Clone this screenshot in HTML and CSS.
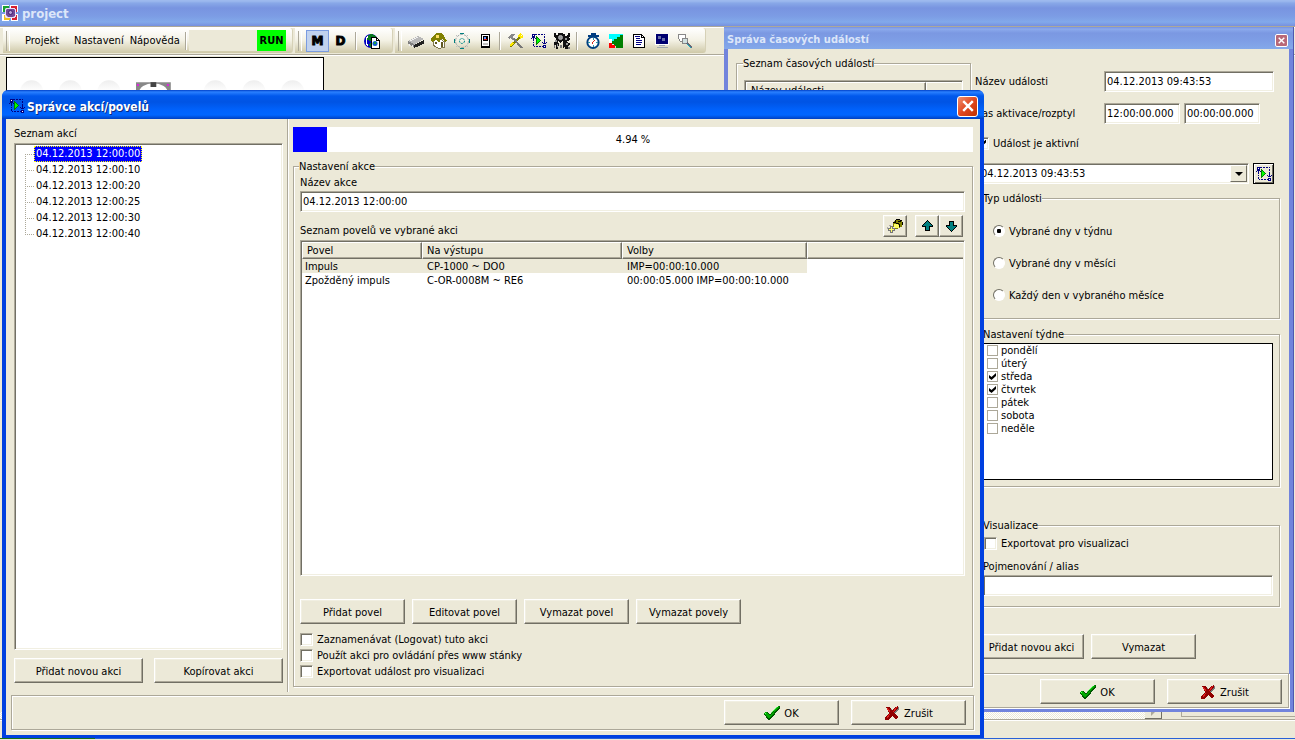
FILE: index.html
```html
<!DOCTYPE html>
<html lang="cs">
<head>
<meta charset="utf-8">
<title>project</title>
<link rel="stylesheet" href="styles.css">
</head>
<body>
<svg class="defs" aria-hidden="true">
  <symbol id="action" viewBox="0 0 16 16">
    <path fill="none" stroke="#000080" d="M4 1.5h2M7 1.5h2M10 1.5h2M13 1.5h1M13.5 3v2M13.5 6v5M2.5 4v4M2.5 9v1M2.5 11v2M3 13.5h1M5 13.5h2M8 13.5h2M11 13.5h1M0 5.5h1M1 4.5h3M4 5.5h1M11 9.5h1M12 10.5h3M15 9.5h1"/>
    <path fill="#fff" stroke="#000080" d="M1.5 1.5h2v2h-2zM12.5 12.5h2v2h-2z"/>
    <path fill="#008000" d="M5 3h1v1h1v1h1v1h1v1h1v1h-1v1H8v1H7v1H6v1H5z"/>
    <path fill="#0f0" d="M6 5h1v1h1v1h1v1H8v1H7v1H6z"/>
  </symbol>
  <symbol id="check" viewBox="0 0 16 16">
    <path fill="#005800" d="M0 9l3-2 3 3 8-9h2v2L6 15H4z"/><path fill="#0a0" d="M0 8l2-1 4 4 8-10h1v1L6 13H4z"/><path stroke="#6f6" d="M1 8l1 0M7 8l6-6" fill="none"/>
  </symbol>
  <symbol id="cross" viewBox="0 0 16 16">
    <path fill="#777" d="M3 3h4l2 3 3-4h3v2l-4 4 3 4-2 3-4-4-3 4H2v-2l4-5z"/><path fill="#900000" d="M2 2h4l2 4 3-4 3-1v2l-4 5 4 4-2 3-4-4-3 4H1v-2l4-5z"/><path fill="none" stroke="#e02020" d="M3 3l3 4M13 2l-4 5M3 13l3-4"/>
  </symbol>
</svg>

<main class="desktop">
  <header class="app-title">
    <svg class="app-logo" viewBox="0 0 16 16"><path fill="#fff" d="M0 0h7v7H0zM8 0h8v7H8zM0 9h7v7H0zM9 9h7v7H9z"/><path fill="#18a030" d="M1 1h6v6H1z"/><path fill="#d82030" d="M9 1h6v6H9zM10 10h5v5h-5z"/><path fill="#f0c020" d="M2 10h6v5H2z"/><path fill="#e8e0f4" d="M4 3h9v1h1v8h-1v1H4l-1-1V4z"/><path fill="#704898" d="M5 4h7l1 1v6l-2 1H6l-2-2V5z"/><circle cx="8.500" cy="7.500" r="2" fill="#b8a0d8" stroke="#402070"/></svg>
    <h1>project</h1>
  </header>

  <nav class="toolbar">
    <div class="band band-menu">
      <button class="menu">Projekt</button><button class="menu">Nastavení</button><button class="menu">Nápověda</button>
      <i class="sep"></i>
      <div class="run-box"><b>RUN</b></div>
    </div>
    <div class="band band-mode">
      <button class="tool letter on">M</button><button class="tool letter">D</button><i class="sep"></i>
      <button class="tool" aria-label="Web"><svg viewBox="0 0 16 16"><circle cx="7" cy="8" r="7" fill="#0000c0"/><path fill="#087820" d="M4 2l4-1 4 2v3L8 6 6 9 4 7l-2 1 1-4zM6 10l3 1-1 4-3-2z"/><path fill="none" stroke="#fff" d="M4 3L2 6v4l2 3"/><path fill="#fff" stroke="#000" d="M7.500 4.500h5l3 3v8h-8z"/><path fill="none" stroke="#000" d="M12.500 4.500v3h3"/><circle cx="11" cy="10.500" r="2.500" fill="#1060d0"/><path fill="#20a040" d="M10 9h2v2h-2z"/></svg></button>
    </div>
    <div class="band band-tools">
      <button class="tool" aria-label="Modul"><svg viewBox="0 0 16 16"><path fill="#b8b8b8" d="M0 8l10-5 6 3-10 6z"/><path fill="#808080" d="M0 8l6 3v3L0 11z"/><path fill="#202020" d="M6 12l10-5v3l-1 2-1-1-1 2-1-1-1 2-1-1-1 2-1-1-2 1z"/><path stroke="#f0f0f0" fill="none" d="M2 8l8-4M1 11v2M4 12v2"/></svg></button>
      <button class="tool" aria-label="Dům"><svg viewBox="0 0 16 16"><path fill="#fff" stroke="#807850" d="M2.500 7.500L8 5l5.500 4v5L8 15.500l-5.500-3z"/><path fill="#808000" d="M0 6l4-5 2-1h5l5 8-2 1-3-4-3 5-3-3-4 2z"/><path fill="#ffe060" d="M5 2h3v3H5z"/><path fill="#605820" d="M10 9h2v5h-2zM4 9h2v2H4z"/></svg></button>
      <button class="tool" aria-label="Nastavení"><svg viewBox="0 0 16 16" fill="none"><circle cx="8" cy="8" r="6.500" stroke="#9aa8a8" stroke-dasharray="3 1"/><path stroke="#008080" d="M6 .5h4M6 15.500h4M.5 6v4M15.500 6v4"/><path stroke="#c0c0c0" d="M2 2l2 2M12 12l2 2M2 14l2-2M12 4l2-2"/><circle cx="8" cy="8" r="2.500" stroke="#008888" stroke-dasharray="2 1"/></svg></button>
      <button class="tool" aria-label="Zařízení"><svg viewBox="0 0 16 16"><path fill="#fff" stroke="#000" d="M4.500 1.500h8v12h-8z"/><path fill="#000" d="M6 3h5v5H6zM4 14h9v1H4z"/><path fill="#6090ff" d="M7 4h2v2H7z"/><path fill="#e01010" d="M7 6h3v1H7z"/><path fill="#c0c0c0" d="M6 10h5v2H6z"/></svg></button>
      <i class="sep"></i>
      <button class="tool" aria-label="Nástroje"><svg viewBox="0 0 16 16"><path fill="none" stroke="#808000" stroke-width="2" d="M2 14L12 4"/><path fill="none" stroke="#ffe800" stroke-width="2" d="M10 4l3-3M12 5l3-2M2 13l3-3"/><path fill="none" stroke="#777" stroke-width="2" d="M5 5l9 10"/><path fill="#888" d="M0 4l3-3h5L5 3l1 3-2 1-1-2-2 1z"/></svg></button>
      <button class="tool" aria-label="Akce"><svg><use href="#action"/></svg></button>
      <button class="tool" aria-label="Stroje"><svg viewBox="0 0 16 16"><path fill="#111" d="M0 0h2v2h2V0h5v1h2v2l3-1V0h2v3l-2 2h2v2l-3 1 1 2h2v2l-2 1v3h-3v-2l-2 1V9L8 8l-1 2-3-2 1 3-1 5H2v-4H0V9l2-1V5L0 4z"/><path fill="#999" d="M5 3h3v3H5zM1 7h2v2H1zM11 5h2v2h-2zM12 10h2v2h-2zM3 11h1v3H3z"/><circle cx="6.500" cy="4.500" r="2" fill="none" stroke="#bbb"/><path fill="#777" d="M0 12h1v3H0zM6 12h2v3H6zM14 14h2v2h-2z"/></svg></button>
      <i class="sep"></i>
      <button class="tool" aria-label="Časovač"><svg viewBox="0 0 16 17"><path fill="#003c80" d="M6 0h5v2h3v2h-3v2H6V4H3V2h3z"/><circle cx="8" cy="10" r="6" fill="#fff" stroke="#004080" stroke-width="2"/><path stroke="#2090a0" d="M8 5v2M8 13v2M3 10h2M11 10h2"/><path stroke="#d02010" d="M8 10l3-3M7.500 10v2"/></svg></button>
      <button class="tool" aria-label="Graf"><svg viewBox="0 0 16 16"><path fill="#0ff" d="M1 1h14v7H1z"/><path fill="#008000" d="M15 1v14H8v-2H6v-2H4V8h2V6h3V4h3V2h3z"/><path fill="red" d="M1 10h3v2h3v3H1z"/><path fill="#fff" d="M1 6h3v4H1z"/></svg></button>
      <button class="tool" aria-label="Dokument"><svg viewBox="0 0 16 16"><path fill="#fff" stroke="#000" d="M2.500 1.500h8l3 3v10h-11z"/><path fill="none" stroke="#000" d="M10.500 1.500v3h3M4 14.500h10"/><path stroke="#000080" d="M4 3.500h5M5 5.500h4M5 7.500h6M5 9.500h6M5 11.500h5"/></svg></button>
      <button class="tool" aria-label="Monitor"><svg viewBox="0 0 16 16"><path fill="#fff" d="M1 1h14v11H1z"/><path fill="#000070" d="M2 1h12v10H2z"/><path fill="#6870a8" d="M4 3h3v3H4zM8 5h3v3H8z"/><path fill="#a0a8b0" d="M5 12h6v1H5zM3 14h11v1H3z"/></svg></button>
      <button class="tool" aria-label="Hledat"><svg viewBox="0 0 16 16"><path fill="#fff" stroke="#888" d="M1.500 1.500h7v7h-5l-2-3z"/><path fill="#d0e0e0" stroke="#888" d="M5.500 5.500h5v5h-5z"/><path stroke="#667" stroke-width="2" d="M10 10l5 5"/><path stroke="#10b0c0" d="M10 11l4 4"/></svg></button>
    </div>
  </nav>

  <div class="canvas">
    <svg class="plan" viewBox="0 0 316 60" aria-hidden="true">
      <defs><linearGradient id="ball" x2="0" y2="1"><stop stop-color="#eee"/><stop offset=".4" stop-color="#fcfcfc"/><stop offset="1" stop-color="#e2e2e2"/></linearGradient></defs>
      <g fill="url(#ball)"><circle cx="20" cy="35" r="12"/><circle cx="60" cy="35" r="12"/><circle cx="100" cy="35" r="12"/><circle cx="210" cy="35" r="12"/><circle cx="250" cy="35" r="12"/><circle cx="290" cy="35" r="12"/></g>
      <path fill="#888" d="M128 25h36v30h-36z"/><ellipse cx="146" cy="36" rx="15" ry="10" fill="#fff"/><path fill="#444" d="M143 25h6v5h-6z"/><path fill="#e020e0" d="M129 27h2v2h-2zM160 27h2v2h-2z"/>
    </svg>
  </div>

  <footer class="status"><div class="scroll-row"><span class="track"></span><span class="arrow"></span><span class="pane"></span></div></footer>

  <section class="window events" aria-label="Správa časových událostí">
    <header class="titlebar"><h2>Správa časových událostí</h2><button class="close" aria-label="Zavřít"><svg viewBox="0 0 10 10"><path d="M1 1l8 8M9 1L1 9"/></svg></button></header>
    <div class="events-body">
      <fieldset class="group events-list"><legend>Seznam časových událostí</legend>
        <div class="sunken grid"><table><colgroup><col class="c-event"><col></colgroup><thead><tr><th>Název události</th><th></th></tr></thead></table></div>
      </fieldset>
      <form class="events-form">
        <div class="row"><label for="ev-name">Název události</label><input class="sunken ev-name" id="ev-name" value="04.12.2013 09:43:53"></div>
        <div class="row"><label for="ev-time">Čas aktivace/rozptyl</label><span class="times"><input class="sunken" id="ev-time" value="12:00:00.000"><input class="sunken" aria-label="Rozptyl" value="00:00:00.000"></span></div>
        <label class="tick active-row"><input type="checkbox" checked>Událost je aktivní</label>
        <div class="combo-row">
          <div class="combo sunken"><select aria-label="Akce"><option>04.12.2013 09:43:53</option></select><span class="drop" aria-hidden="true"></span></div>
          <button type="button" class="open-actions" aria-label="Správce akcí"><svg><use href="#action"/></svg></button>
        </div>
        <fieldset class="group type"><legend>Typ události</legend>
          <label class="radio"><input type="radio" name="type" checked>Vybrané dny v týdnu</label>
          <label class="radio"><input type="radio" name="type">Vybrané dny v měsíci</label>
          <label class="radio"><input type="radio" name="type">Každý den v vybraného měsíce</label>
        </fieldset>
        <fieldset class="group week"><legend>Nastavení týdne</legend>
          <div class="days">
            <label><input type="checkbox">pondělí</label>
            <label><input type="checkbox">úterý</label>
            <label><input type="checkbox" checked>středa</label>
            <label><input type="checkbox" checked>čtvrtek</label>
            <label><input type="checkbox">pátek</label>
            <label><input type="checkbox">sobota</label>
            <label><input type="checkbox">neděle</label>
          </div>
        </fieldset>
        <fieldset class="group visual"><legend>Visualizace</legend>
          <label class="tick"><input type="checkbox">Exportovat pro visualizaci</label>
          <label class="alias" for="alias">Pojmenování / alias</label>
          <input class="sunken" id="alias">
        </fieldset>
        <div class="event-buttons"><button type="button" class="btn">Přidat novou akci</button><button type="button" class="btn">Vymazat</button></div>
      </form>
    </div>
    <footer class="actions"><button class="btn big"><svg><use href="#check"/></svg>OK</button><button class="btn big"><svg><use href="#cross"/></svg>Zrušit</button></footer>
  </section>

  <section class="window manager" aria-label="Správce akcí/povelů">
    <header class="titlebar"><svg class="title-icon"><use href="#action"/></svg><h2>Správce akcí/povelů</h2><button class="close" aria-label="Zavřít"><svg viewBox="0 0 10 10"><path d="M1 1l8 8M9 1L1 9"/></svg></button></header>
    <div class="manager-body">
      <div class="left">
        <h3>Seznam akcí</h3>
        <ul class="sunken tree">
          <li><span class="selected">04.12.2013 12:00:00</span></li>
          <li><span>04.12.2013 12:00:10</span></li>
          <li><span>04.12.2013 12:00:20</span></li>
          <li><span>04.12.2013 12:00:25</span></li>
          <li><span>04.12.2013 12:00:30</span></li>
          <li><span>04.12.2013 12:00:40</span></li>
        </ul>
        <div class="left-buttons"><button class="btn">Přidat novou akci</button><button class="btn">Kopírovat akci</button></div>
      </div>
      <div class="right">
        <div class="progress" role="progressbar" aria-valuenow="4.94"><span class="fill" style="width:4.94%"></span><span class="value">4.94 %</span></div>
        <fieldset class="group setup"><legend>Nastavení akce</legend>
          <label for="act-name">Název akce</label>
          <input class="sunken" id="act-name" value="04.12.2013 12:00:00">
          <div class="list-head">
            <h3>Seznam povelů ve vybrané akci</h3>
            <button class="btn icon run" aria-label="Spustit povel"><svg viewBox="0 0 16 16"><path fill="#808000" d="M7 3h2V1h4v1h2v2h1v3h-1v2h-2v1h-2v1H8V9H6V5h1z"/><path fill="#ffff60" d="M7 6h4v1h1v3H8V9H7zM11 3h2v1h-2z"/><path stroke="#000" fill="none" d="M6 4.500h3M8.500 2v2M9 1.500h4M13 2.500h2M15.500 4v3M9 5.500h3M12.500 6v3M11 3.500h3"/><path fill="#ff6" stroke="#777" d="M3.500 8.500h2v2h2v2h-2v2h-2v-2h-2v-2h2z"/><path fill="none" stroke="#aaa" d="M.5 11V9M2 7.500h2"/></svg></button>
            <button class="btn icon" aria-label="Nahoru"><svg viewBox="0 0 16 16"><path fill="#008080" stroke="#000" d="M8.500 2.500l5 5v1h-3v4h-4v-4h-3v-1z"/></svg></button>
            <button class="btn icon" aria-label="Dolů"><svg viewBox="0 0 16 16"><path fill="#008080" stroke="#000" d="M6.500 3.500h4v4h3v1l-5 5-5-5v-1h3z"/></svg></button>
          </div>
          <div class="sunken grid">
            <table>
              <colgroup><col class="c1"><col class="c2"><col class="c3"><col></colgroup>
              <thead><tr><th>Povel</th><th>Na výstupu</th><th>Volby</th><th></th></tr></thead>
              <tbody>
                <tr class="picked"><td>Impuls</td><td>CP-1000 ~ DO0</td><td>IMP=00:00:10.000</td><td></td></tr>
                <tr><td>Zpožděný impuls</td><td>C-OR-0008M ~ RE6</td><td>00:00:05.000 IMP=00:00:10.000</td><td></td></tr>
              </tbody>
            </table>
          </div>
          <div class="cmd-buttons"><button class="btn">Přidat povel</button><button class="btn">Editovat povel</button><button class="btn">Vymazat povel</button><button class="btn">Vymazat povely</button></div>
          <label class="tick"><input type="checkbox">Zaznamenávat (Logovat) tuto akci</label>
          <label class="tick"><input type="checkbox">Použít akci pro ovládání přes www stánky</label>
          <label class="tick"><input type="checkbox">Exportovat událost pro visualizaci</label>
        </fieldset>
      </div>
    </div>
    <footer class="actions"><button class="btn big"><svg><use href="#check"/></svg>OK</button><button class="btn big"><svg><use href="#cross"/></svg>Zrušit</button></footer>
  </section>
</main>
</body>
</html>
```

FILE: styles.css
```css
:root {
  --face: #ece9d8;
  --shade: #aca899;
  --dark: #716f64;
  --light: #fff;
}
* { box-sizing: border-box; }
body, h1, h2, h3, ul, fieldset, legend { margin: 0; padding: 0; }
body, button, input, select {
  font: 11px/13px "DejaVu Sans Condensed", "Noto Sans", sans-serif;
  color: #000;
}
body { background: var(--face); }
h3 { font-size: 11px; font-weight: normal; }
button, input, select { margin: 0; padding: 0; border: 0; border-radius: 0; background: none; }
svg { display: block; width: 16px; height: 16px; flex: none; }
.defs { position: absolute; width: 0; height: 0; }
use, .tool svg path, .icon svg path { shape-rendering: crispEdges; }

/* Main application window */
.desktop {
  position: relative;
  display: flex;
  flex-direction: column;
  height: 100vh;
  min-height: 700px;
  overflow: hidden;
}
.app-title {
  display: flex;
  align-items: center;
  gap: 4px;
  height: 27px;
  padding-left: 2px;
  border-bottom: 1px solid var(--shade);
  background: linear-gradient(#9db9ee 0 1px, #89a8e8 3px, #7894e0 8px, #7c9ce4 16px, #82a9ea 22px, #7690df);
}
.app-title h1 { font-size: 13px; line-height: 16px; padding-top: 1px; color: #dce6f9; }
.toolbar {
  display: flex;
  gap: 2px;
  height: 28px;
  padding: 1px 0 1px 3px;
  border-bottom: 1px solid var(--shade);
  box-shadow: inset 0 1px #fff, 0 1px #fff;
}
.band {
  display: flex;
  align-items: center;
  border-radius: 0 3px 3px 0;
  background: linear-gradient(#fff, #f3f1e4 50%, #cfc9a8);
  border-right: 1px solid #d6d1b7;
}
.band::before {
  content: "";
  width: 2px;
  height: 20px;
  margin: 0 4px 0 3px;
  border-left: 1px solid var(--shade);
  border-right: 1px solid #fff;
}
.band-menu { width: 290px; }
.band-mode { width: 98px; }
.band-tools { width: 311px; }
.band-tools::before { margin-right: 2px; }
.menu { height: 22px; padding: 0 3px; }
.menu:first-of-type { margin: 0 9px 0 8px; }
.sep { flex: none; width: 2px; height: 18px; margin: 0 3px; border-left: 1px solid var(--shade); border-right: 1px solid #fff; }
.band-menu .sep { margin: 0 2px 0 auto; }
.run-box { width: 97px; height: 21px; margin-right: 6px; display: flex; justify-content: flex-end; background: var(--face); }
.run-box b { width: 29px; background: #0f0; line-height: 21px; text-align: center; }
.tool { display: grid; place-items: center; flex: none; width: 23px; height: 22px; }
.tool.letter { font: 900 12px/20px "DejaVu Sans", sans-serif; -webkit-text-stroke: 1px #000; border: 1px solid transparent; }
.tool.on { background: #c1d2ee; border-color: #7a9be0; }

.canvas { flex: 1; min-height: 0; padding: 2px 0 0 6px; }
.plan { width: 318px; height: 60px; border: 1px solid #000; background: #fff; }
.status { height: 28px; background: linear-gradient(90deg, #187018 95px, #2860d8 95px) left bottom 1px / 100% 1px no-repeat; }
.scroll-row { display: flex; height: 8px; border-bottom: 1px solid var(--shade); box-shadow: 0 1px #fff; }
.track { flex: 1; background: repeating-conic-gradient(#fff 0 25%, var(--face) 0 50%) 0 0 / 2px 2px; }
.arrow { width: 17px; border: solid var(--dark); border-width: 0 1px 1px 0; }
.arrow::before { content: ""; display: block; width: 0; margin-left: 6px; border: solid transparent; border-width: 0 0 4px 4px; border-left-color: var(--shade); }
.pane { width: 114px; margin: 0 0 2px 19px; border: solid var(--shade); border-width: 0 0 1px 1px; }

/* Shared control looks */
.sunken {
  background: #fff;
  border: 1px solid;
  border-color: var(--shade) #fff #fff var(--shade);
  box-shadow: inset 1px 1px var(--dark), inset -1px -1px #f1efe2;
}
input.sunken { height: 21px; padding: 0 2px; min-width: 0; }
.btn {
  display: flex;
  align-items: center;
  justify-content: center;
  gap: 4px;
  width: 105px;
  height: 25px;
  padding-top: 1px;
  background: var(--face);
  border: 1px solid;
  border-color: #fff var(--dark) var(--dark) #fff;
  box-shadow: inset -1px -1px var(--shade), inset 1px 1px #f1efe2;
}
.btn.big { width: 115px; }
.group {
  min-width: 0;
  border: 1px solid var(--shade);
  box-shadow: 1px 1px #fff, inset 1px 1px #fff;
}
legend { height: 13px; background: var(--face); white-space: nowrap; }
input[type="checkbox"], input[type="radio"] { appearance: none; flex: none; width: 13px; height: 13px; display: grid; place-items: center; }
input[type="checkbox"] {
  background: #fff;
  border: 1px solid;
  border-color: var(--shade) #fff #fff var(--shade);
  box-shadow: inset 1px 1px var(--dark), inset -1px -1px #f1efe2;
}
input[type="checkbox"]:checked::before {
  content: "";
  width: 7px;
  height: 7px;
  background: #000;
  clip-path: polygon(0 29%, 0 71%, 36% 100%, 100% 43%, 100% 0, 36% 58%);
}
input[type="radio"] {
  width: 12px;
  height: 12px;
  border-radius: 50%;
  background: #fff;
  border: 1px solid;
  border-color: var(--dark) #fff #fff var(--dark);
}
input[type="radio"]:checked::before { content: ""; width: 4px; height: 4px; border-radius: 1px; background: #000; }
.tick { display: flex; align-items: center; gap: 4px; height: 16px; }

.window { position: absolute; display: flex; flex-direction: column; background: var(--face); }
.titlebar { display: flex; align-items: center; flex: none; }
.close { margin-left: auto; display: grid; place-items: center; }
.close path { fill: none; stroke: #fff; stroke-width: 2; }
.actions {
  display: flex;
  justify-content: flex-end;
  align-items: center;
  gap: 12px;
  flex: none;
  height: 35px;
  padding-right: 7px;
  border: 1px solid var(--shade);
  box-shadow: 1px 1px #fff, inset 1px 1px #fff;
}

.grid { overflow: hidden; padding: 1px; }
.grid table { width: 100%; border-collapse: separate; border-spacing: 0; table-layout: fixed; }
.grid th {
  height: 17px;
  padding: 0 4px;
  font-weight: normal;
  text-align: left;
  background: var(--face);
  border: 1px solid;
  border-color: #fff var(--dark) var(--dark) #fff;
  box-shadow: inset -1px -1px var(--shade);
}
.grid th:last-child { border-right: 0; box-shadow: inset 0 -1px var(--shade); }
.grid td { height: 14px; line-height: 13px; padding: 1px 0 0 5px; white-space: nowrap; }
.grid td:first-child { padding-left: 3px; }

/* Time events window */
.events {
  inset: 27px 2px 28px 724px;
  border: 4px solid #7284dc;
  border-top: 0;
  box-shadow: 1px 0 #5058b0;
}
.events .titlebar { height: 22px; margin: 0 -4px; padding: 4px 5px 0 3px; background: linear-gradient(#7590e0, #8caaec 2px, #7b98e2 6px, #7e9ee6 14px, #84a9ea); }
.events h2 { font-size: 11px; line-height: 14px; color: #dce6f9; }
.events .close { width: 13px; height: 13px; border: 1px solid #fff; border-radius: 2px; background: #b86878; }
.events .close svg { width: 7px; height: 7px; }
.events-body { flex: 1; min-height: 0; display: flex; gap: 4px; padding: 0 9px 0 8px; }
.events-list { flex: 1; margin: 8px 0 14px; padding: 10px 7px 8px; }
.events-list legend { margin-left: -1px; }
.events-list .grid { height: 100%; }
.c-event { width: 180px; }
.events-form { flex: none; width: 305px; padding-top: 22px; }
.row { display: flex; align-items: center; justify-content: space-between; margin-bottom: 11px; padding-right: 6px; }
.row .ev-name { width: 170px; }
.times { display: flex; gap: 4px; width: 170px; }
.times input { width: 76px; }
.active-row { padding-left: 1px; }
.combo-row { display: flex; gap: 4px; margin: 12px 6px 8px 0; }
.combo { position: relative; flex: 1; height: 21px; }
.combo select { appearance: none; width: 100%; height: 19px; padding-left: 5px; }
.drop {
  position: absolute;
  top: 1px;
  right: 1px;
  bottom: 1px;
  width: 17px;
  display: grid;
  place-items: center;
  background: var(--face);
  border: 1px solid;
  border-color: #fff var(--dark) var(--dark) #fff;
  pointer-events: none;
}
.drop::before { content: ""; border: 4px solid transparent; border-top-color: #000; border-bottom: 0; }
.open-actions { display: grid; place-items: center; width: 21px; height: 21px; border: 1px solid #000; box-shadow: inset 1px 1px #fff, inset -1px -1px var(--dark); }
.events-form .group { padding: 0 6px 0 7px; }
.events-form .type { padding: 10px 17px 7px; }
.events-form .type legend { margin-left: -10px; }
.radio { display: flex; align-items: center; gap: 4px; height: 32px; }
.events-form .week { margin-top: 9px; padding-top: 2px; padding-bottom: 6px; }
.days { height: 137px; padding: 0 3px; border: 1px solid #000; background: #fff; }
.days label { display: flex; align-items: center; gap: 3px; height: 13px; }
.days input[type="checkbox"] { width: 11px; height: 11px; border-color: var(--shade); box-shadow: none; }
.events-form .visual { margin-top: 32px; padding-top: 3px; padding-bottom: 10px; }
.visual .tick { padding-left: 1px; }
.visual .alias { display: block; margin: 9px 0 2px; }
.visual input.sunken { display: block; width: 100%; }
.event-buttons { display: flex; gap: 7px; margin: 27px 0 0 4px; }
.events .actions { margin-left: 5px; padding-right: 6px; padding-top: 2px; }

/* Action manager window */
.manager {
  inset: 90px 311px 2px 2px;
  border: 4px solid #0040e0;
  border-top: 0;
  border-bottom-width: 3px;
  border-radius: 7px 7px 0 0;
}
.manager .titlebar {
  height: 29px;
  margin: 0 -4px;
  padding: 3px 6px 0 7px;
  gap: 2px;
  border-radius: 6px 6px 0 0;
  background: linear-gradient(#0040c8, #2a80ff 2px, #0058ec 6px, #0054e4 12px, #0062fc 20px, #0066ff 25px, #0040c0);
}
.manager h2 { padding-top: 1px; font-size: 12px; line-height: 16px; color: #fff; text-shadow: 1px 1px #0a2a80; }
.manager .close { width: 21px; height: 21px; border: 1px solid #fff; border-radius: 3px; background: linear-gradient(135deg, #f09070, #e04820 50%, #c03000); }
.manager .close svg { width: 12px; height: 12px; }
.manager-body { flex: 1; min-height: 0; display: flex; }
.left { flex: none; width: 282px; display: flex; flex-direction: column; padding: 8px 4px 9px 8px; border-right: 1px solid var(--shade); box-shadow: 1px 0 #fff; }
.tree { flex: 1; margin: 3px 0 8px; padding: 2px 0 0 10px; list-style: none; }
.tree li { display: flex; align-items: center; height: 16px; }
.tree li::before { content: ""; width: 9px; align-self: stretch; background: linear-gradient(90deg, var(--shade) 50%, transparent 50%) 0 8px / 2px 1px repeat-x, linear-gradient(var(--shade) 50%, transparent 50%) 0 0 / 1px 2px repeat-y; }
.tree li:first-child::before { margin-top: 8px; background-position: 0 0; }
.tree li:last-child::before { margin-bottom: 7px; }
.tree span { padding: 0 1px; line-height: 14px; border: 1px solid transparent; }
.tree .selected { color: #fff; background: #00f; border: 1px dotted #ff0; }
.left-buttons { display: flex; gap: 11px; }
.left-buttons .btn { flex: 1; }
.right { flex: 1; min-width: 0; display: flex; flex-direction: column; padding: 8px 7px 5px 5px; }
.progress { position: relative; flex: none; height: 25px; margin-bottom: 8px; background: #fff; text-align: center; }
.fill { position: absolute; inset: 0 auto 0 0; background: #00f; }
.value { line-height: 26px; }
.setup { flex: 1; display: flex; flex-direction: column; padding: 3px 7px 7px 6px; }
.setup legend { margin-left: -1px; }
.setup input.sunken { width: 100%; margin-top: 2px; }
.list-head { display: flex; align-items: flex-end; height: 28px; padding: 3px 2px 3px 0; }
.list-head h3 { margin-right: auto; }
.btn.icon { width: 24px; height: 22px; padding: 0; }
.btn.icon.run { margin-right: 8px; }
.setup .grid { flex: 1; }
.c1 { width: 120px; }
.c2 { width: 200px; }
.c3 { width: 185px; }
.picked td:not(:last-child) { background: var(--face); }
.cmd-buttons { display: flex; gap: 7px; margin: 23px 0 7px; }
.manager .actions { margin: 3px 6px 5px 5px; }
```
